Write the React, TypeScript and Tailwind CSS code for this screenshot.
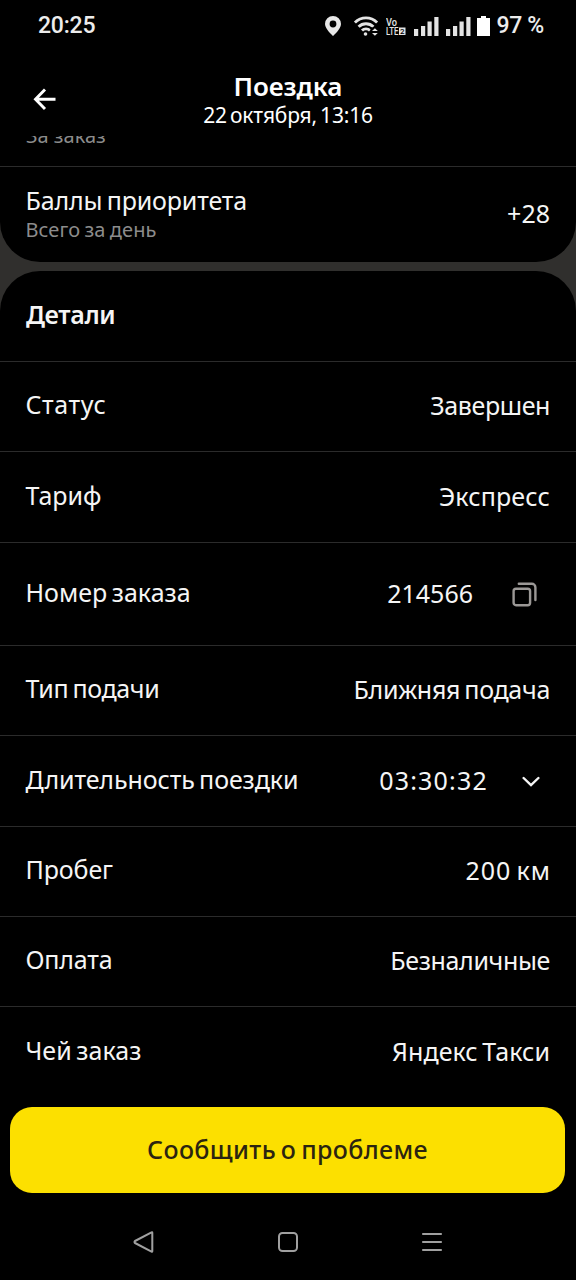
import type { ReactNode } from "react";

interface DetailRow {
  label: string;
  value: string;
  height: string;
  labelTracking: string;
  valueTracking: string;
  icon?: ReactNode;
}

function CopyIcon() {
  return (
    <svg className="w-[25px] h-[25px] ml-[39px] mr-[13px]" viewBox="0 0 25 25" fill="none" stroke="#9b9896" strokeWidth={2.4}>
      <rect x="1.6" y="6.7" width="16.5" height="16.5" rx="2.4" />
      <path strokeLinecap="round" d="M6.8 1.8H19.800a3.600 3.600 0 013.600 3.600V18" />
    </svg>
  );
}

function ChevronIcon() {
  return (
    <svg className="w-4.5 h-3 ml-[35px] mr-2.5 mt-0.5" viewBox="0 0 18 12" fill="none" stroke="#f5f5f5" strokeWidth={2.4}>
      <path strokeLinecap="round" d="M1.600 2l7.400 7.200L16.400 2" />
    </svg>
  );
}

const rows: DetailRow[] = [
  { label: "Статус", value: "Завершен", height: "h-[90px]", labelTracking: "tracking-[0.6px]", valueTracking: "tracking-[-0.4px]" },
  { label: "Тариф", value: "Экспресс", height: "h-[91px]", labelTracking: "tracking-normal", valueTracking: "tracking-[0.15px]" },
  { label: "Номер заказа", value: "214566", height: "h-[103px]", labelTracking: "tracking-[0.02px]", valueTracking: "tracking-normal", icon: <CopyIcon /> },
  { label: "Тип подачи", value: "Ближняя подача", height: "h-[90px]", labelTracking: "tracking-[-0.35px]", valueTracking: "tracking-[-0.3px]" },
  { label: "Длительность поездки", value: "03:30:32", height: "h-[91px]", labelTracking: "tracking-[-0.1px]", valueTracking: "tracking-[1.2px] -mr-px", icon: <ChevronIcon /> },
  { label: "Пробег", value: "200 км", height: "h-[90px]", labelTracking: "tracking-[-0.1px]", valueTracking: "tracking-[0.95px] -mr-px" },
  { label: "Оплата", value: "Безналичные", height: "h-[90px]", labelTracking: "tracking-[-0.2px]", valueTracking: "tracking-[-0.35px]" },
  { label: "Чей заказ", value: "Яндекс Такси", height: "h-[97px] pb-[5px]", labelTracking: "tracking-[0.03px]", valueTracking: "tracking-[0.06px]" },
];

function SignalIcon({ className }: { className: string }) {
  return (
    <svg className={className} viewBox="0 0 25 20" fill="#e4e4e4">
      <rect x="0" y="13" width="4.2" height="7" />
      <rect x="7" y="10" width="4.2" height="10" />
      <rect x="13.500" y="5.500" width="4.200" height="14.500" />
      <rect x="20.300" y="1" width="4.200" height="19" />
    </svg>
  );
}

function StatusBar() {
  return (
    <div className="h-[50px] shrink-0 flex items-center pt-px pl-[38px] pr-8 font-['Roboto',sans-serif] font-medium text-[23px] text-[#ececec]">
      <span className="pt-px tracking-[-0.2px]">20:25</span>
      <svg className="w-4 h-5 ml-auto" viewBox="0 0 16 20" fill="#e8e8e8">
        <path fillRule="evenodd" d="M8 0a8 8 0 018 8c0 5.200-8 12-8 12S0 13.200 0 8a8 8 0 018-8zm0 4.600a3.400 3.400 0 100 6.800 3.400 3.400 0 000-6.800z" />
      </svg>
      <svg className="w-6 h-5 ml-[13px]" viewBox="0 0 24 20" fill="none" stroke="#e4e4e4" strokeWidth={2.900}>
        <path d="M.9 6.600a15.500 15.500 0 0122.200 0" />
        <path d="M4.600 10.800a10.500 10.500 0 0114.800 0" />
        <path d="M8 14.600a5.600 5.600 0 018 0" />
        <circle cx="11.500" cy="18" r="1.800" fill="#e4e4e4" stroke="none" />
        <path fill="#000" stroke="none" d="M16.500 11.500H24V20h-7.500z" />
        <path fill="#e4e4e4" stroke="none" d="M18 15l2.900-2.800 2.900 2.800zM18 17l2.900 2.800 2.900-2.800z" />
      </svg>
      <svg className="w-5 h-5 ml-2 font-medium" viewBox="0 0 20 20" fill="#e4e4e4">
        <text x="0" y="9.500" fontSize="11" textLength="11" lengthAdjust="spacingAndGlyphs">Vo</text>
        <text x="0" y="19" fontSize="11" textLength="12.500" lengthAdjust="spacingAndGlyphs">LTE</text>
        <rect x="13" y="11.500" width="6.500" height="7.500" />
        <text x="14" y="18" fontSize="8" fill="#000" textLength="4.500" lengthAdjust="spacingAndGlyphs">2</text>
      </svg>
      <SignalIcon className="w-[25px] h-5 ml-2" />
      <SignalIcon className="w-[25px] h-5 ml-[7px]" />
      <svg className="w-[13px] h-5 ml-[6px]" viewBox="0 0 13 20" fill="#fff">
        <path d="M4 0h5v2h4v18H0V2h4z" />
      </svg>
      <span className="ml-[6px] pt-px tracking-[-0.3px] whitespace-nowrap">97 %</span>
    </div>
  );
}

function Header() {
  return (
    <header className="h-[86px] shrink-0 grid grid-cols-[90px_1fr_90px] text-center text-white">
      <svg className="w-6 h-6 ml-[33px] mt-[37px]" viewBox="0 0 24 24" fill="none" stroke="#fff" strokeWidth={2.900}>
        <path d="M22.500 12.300H2.500M12 2.600L2.500 12.300 12 22" />
      </svg>
      <div className="pt-5 whitespace-nowrap">
        <h1 className="text-[26px] leading-8 font-semibold tracking-[-0.1px]">Поездка</h1>
        <p className="text-[21px] leading-[26px] tracking-[-0.2px] [word-spacing:-2px]">22 октября, 13:16</p>
      </div>
    </header>
  );
}

function NavBar() {
  return (
    <nav className="h-[78px] shrink-0 flex items-center justify-center gap-[122px] pt-0.5">
      <svg className="w-[22px] h-[22px]" viewBox="0 0 22 22" fill="none" stroke="#a0a0a0" strokeWidth={2}>
        <path strokeLinejoin="round" d="M19.300 1.700V20.300Q19.300 21 18.500 20.600L2 12Q1 11 2 10L18.500 1.400Q19.300 1 19.300 1.700z" />
      </svg>
      <svg className="w-[22px] h-[22px]" viewBox="0 0 22 22" fill="none" stroke="#a0a0a0" strokeWidth={2}>
        <rect x="2" y="2" width="18" height="18" rx="3.500" />
      </svg>
      <svg className="w-[22px] h-[22px]" viewBox="0 0 22 22" fill="none" stroke="#a0a0a0" strokeWidth={2}>
        <path d="M1.200 3h19.600M1.200 11h19.600M1.200 19h19.600" />
      </svg>
    </nav>
  );
}

export default function App() {
  return (
    <div className="w-[576px] h-[1280px] flex flex-col overflow-hidden bg-black text-[#f5f5f5] font-['Noto_Sans',sans-serif]">
      <StatusBar />
      <Header />

      <main className="h-[967px] shrink-0 bg-[#302f2d] overflow-hidden">
        <section className="bg-black rounded-b-[40px]">
          <div className="h-[31px] flex items-end overflow-hidden border-b border-[#2b2b2b] px-[26px] pb-4">
            <p className="text-[20px] leading-7 text-[#8c8c8c]">За заказ</p>
          </div>
          <div className="h-[95px] flex items-center justify-between px-[26px]">
            <div className="-ml-[0.5px] pb-0.5">
              <p className="text-[25px] leading-8 tracking-[-0.15px] [word-spacing:-2px]">Баллы приоритета</p>
              <p className="text-[20px] leading-[27px] tracking-[0.1px] [word-spacing:-1px] text-[#8c8c8c]">Всего за день</p>
            </div>
            <span className="pb-0.5 text-[25px]">+28</span>
          </div>
        </section>

        <section className="mt-[9px] bg-black rounded-t-[40px]">
          <h2 className="h-[90px] flex items-center px-[26px] pb-0.5 text-[25px] font-semibold tracking-[-0.35px]">Детали</h2>
          {rows.map((row) => (
            <div key={row.label} className={`${row.height} flex items-center border-t border-[#2b2b2b] px-[26px] text-[25px] whitespace-nowrap [word-spacing:-2px]`}>
              <span className={`-ml-[0.5px] pb-[3px] ${row.labelTracking}`}>{row.label}</span>
              <span className={`ml-auto pb-px ${row.valueTracking}`}>{row.value}</span>
              {row.icon}
            </div>
          ))}
        </section>
      </main>

      <div className="h-[99px] shrink-0 px-[10px] pt-1">
        <button className="w-[555px] h-[86px] rounded-[22px] bg-[#fce000] text-[#2b2410] text-[25px] font-medium tracking-[0.37px] [word-spacing:-2px]">
          Сообщить о проблеме
        </button>
      </div>
      <NavBar />
    </div>
  );
}
